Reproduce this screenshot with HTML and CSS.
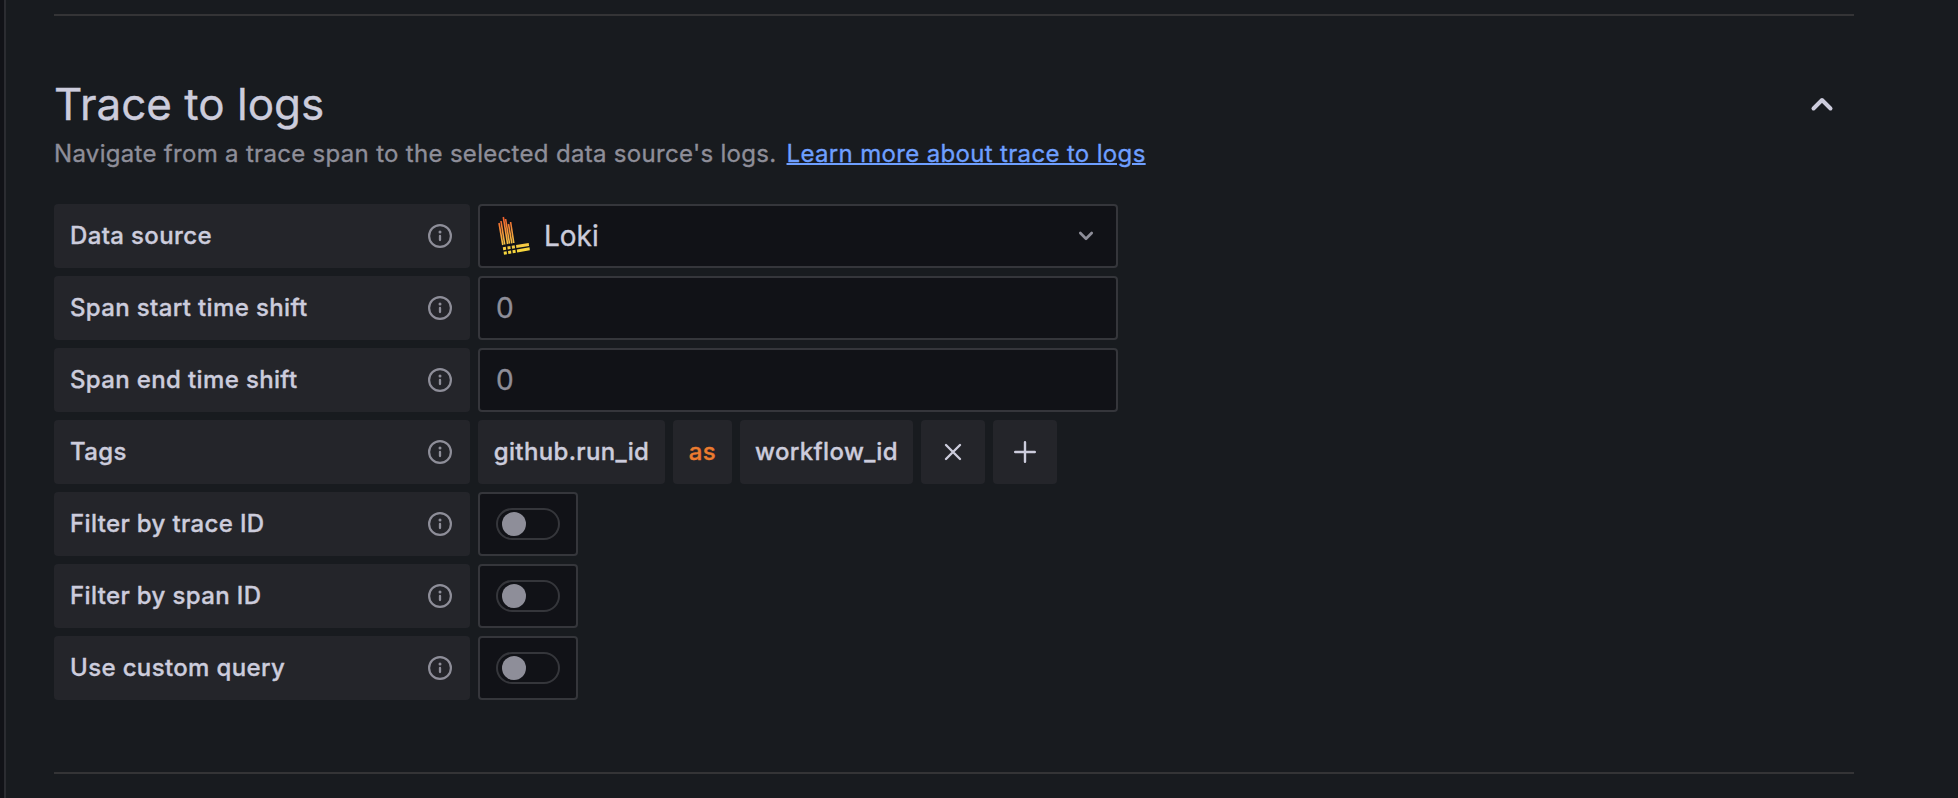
FILE: index.html
```html
<!DOCTYPE html>
<html lang="en">
<head>
<meta charset="utf-8">
<title>Trace to logs</title>
<link rel="stylesheet" href="styles.css">
</head>
<body>
<svg class="defs" width="0" height="0">
  <symbol id="info" viewBox="0 0 24 24">
    <circle cx="12" cy="12" r="10.900" fill="none" stroke="currentColor" stroke-width="2.200"/>
    <circle cx="12" cy="8" r="1.500" fill="currentColor"/>
    <path d="M12 12v4" stroke="currentColor" stroke-width="2.300" stroke-linecap="round"/>
  </symbol>
</svg>
<main class="panel">
  <hr class="divider">
  <section class="section">
    <header class="header">
      <h3 class="title">Trace to logs</h3>
      <svg class="collapse" width="24" height="16" viewBox="0 0 24 16"><path d="M3.500 12.500 12 4l8.500 8.500" fill="none" stroke="currentColor" stroke-width="4" stroke-linecap="round" stroke-linejoin="round"/></svg>
    </header>
    <p class="description"><span>Navigate from a trace span to the selected data source's logs.</span><a class="link" href="#">Learn more about trace to logs</a></p>
    <div class="rows">
      <div class="row">
        <div class="label">Data source<svg class="info"><use href="#info"/></svg></div>
        <div class="field">
          <svg class="loki" width="34" height="40" viewBox="0 0 34 40">
            <defs><linearGradient id="flame" gradientUnits="userSpaceOnUse" x1="15" y1="40" x2="10" y2="0"><stop offset="0" stop-color="#f8df3a"/><stop offset=".3" stop-color="#f5c445"/><stop offset="1" stop-color="#f05a2b"/></linearGradient></defs>
            <g fill="none" stroke="url(#flame)" stroke-width="1.600">
              <path d="M2 7 5.800 29M4 5 7.700 28.500M6.300 1 10.600 28M8.600 3 12.500 27.700M11.500 8 14.800 27.400M13.600 6 16.800 27"/>
            </g>
            <g fill="url(#flame)">
              <path d="M5.800 31.200l3-.4.400 2.900-3 .5zM10.300 30.500l3-.5.400 3-3 .4zM14.700 29.800l3-.5.400 3-3 .4zM19 29.100l12.700-2.200.4 3-12.700 2.100z"/>
              <path d="M6.600 35.700l3-.5.400 3-3 .5zM11 35l3-.5.400 3-3 .5zM15.400 34.200l3-.4.400 3-3 .4zM19.800 33.500l12.700-2.200.4 3-12.700 2.200z"/>
            </g>
          </svg>
          <span class="value">Loki</span>
          <svg class="caret" width="16" height="10" viewBox="0 0 16 10"><path d="m2.300 2 5.700 5.700L13.700 2" fill="none" stroke="currentColor" stroke-width="2.700" stroke-linecap="round" stroke-linejoin="round"/></svg>
        </div>
      </div>
      <div class="row">
        <div class="label">Span start time shift<svg class="info"><use href="#info"/></svg></div>
        <div class="field placeholder">0</div>
      </div>
      <div class="row">
        <div class="label">Span end time shift<svg class="info"><use href="#info"/></svg></div>
        <div class="field placeholder">0</div>
      </div>
      <div class="row">
        <div class="label">Tags<svg class="info"><use href="#info"/></svg></div>
        <div class="chip key">github.run_id</div>
        <div class="chip as">as</div>
        <div class="chip mapped">workflow_id</div>
        <div class="chip icon"><svg width="24" height="24" viewBox="0 0 24 24"><path d="m5 5 14 14m0-14-14 14" stroke="currentColor" stroke-width="2.400" stroke-linecap="round"/></svg></div>
        <div class="chip icon"><svg width="24" height="24" viewBox="0 0 24 24"><path d="M12 2.200v19.600M2.200 12h19.600" stroke="currentColor" stroke-width="2.400" stroke-linecap="round"/></svg></div>
      </div>
      <div class="row">
        <div class="label">Filter by trace ID<svg class="info"><use href="#info"/></svg></div>
        <div class="switch-box"><div class="switch"><div class="thumb"></div></div></div>
      </div>
      <div class="row">
        <div class="label">Filter by span ID<svg class="info"><use href="#info"/></svg></div>
        <div class="switch-box"><div class="switch"><div class="thumb"></div></div></div>
      </div>
      <div class="row">
        <div class="label">Use custom query<svg class="info"><use href="#info"/></svg></div>
        <div class="switch-box"><div class="switch"><div class="thumb"></div></div></div>
      </div>
    </div>
  </section>
  <hr class="divider">
</main>
</body>
</html>
```
FILE: styles.css
```css
* { box-sizing: border-box; }

body {
  margin: 0;
  padding-left: 4px;
  background: #111217;
  color: #ccccdc;
  font-family: Inter, sans-serif;
  -webkit-text-stroke: 0.35px currentColor;
}

.defs { display: block; }

.panel {
  height: 798px;
  padding: 14px 104px 0 48px;
  border-left: 2px solid #2b2c31;
  background: #181b1f;
}

.divider {
  height: 2px;
  margin: 0;
  border: 0;
  background: #343436;
}

.section { height: 756px; padding-top: 62px; }

.header {
  display: flex;
  align-items: center;
  justify-content: space-between;
  height: 52px;
  padding-right: 20px;
}

.title {
  margin: 0;
  font-size: 44px;
  font-weight: 400;
  line-height: 52px;
}

.description {
  display: flex;
  gap: 10px;
  margin: 6px 0 0;
  color: #8e8e99;
  font-size: 24px;
  line-height: 36px;
  letter-spacing: 0.31px;
}

.link {
  color: #6e9fff;
  letter-spacing: 0.34px;
  text-decoration: underline;
  text-decoration-thickness: 2px;
}

.rows {
  display: flex;
  flex-direction: column;
  gap: 8px;
  margin-top: 32px;
}

.row { display: flex; height: 64px; }

.label {
  display: flex;
  align-items: center;
  justify-content: space-between;
  width: 416px;
  margin-right: 8px;
  padding: 0 18px 2px 16px;
  border-radius: 4px;
  background: #24252a;
  font-size: 24px;
  font-weight: 500;
  letter-spacing: 0.36px;
}

.info {
  width: 24px;
  height: 24px;
  margin-top: 2px;
  color: #8e8e99;
}

.field {
  display: flex;
  align-items: center;
  width: 640px;
  padding: 0 22px 0 16px;
  border: 2px solid #35363b;
  border-radius: 4px;
  background: #111217;
  font-size: 28px;
}

.placeholder { color: #8e8e99; }

.loki { margin: 0 13px 0 1px; }

.caret { margin-left: auto; color: #8e8e99; }

.chip {
  display: flex;
  align-items: center;
  justify-content: center;
  margin-right: 8px;
  padding-bottom: 2px;
  border-radius: 4px;
  background: #24252a;
  font-size: 24px;
  font-weight: 500;
  letter-spacing: 0.36px;
}

.key { width: 187px; }
.as { width: 59px; color: #eb7b2f; }
.mapped { width: 173px; }
.icon { width: 64px; padding-bottom: 0; }

.switch-box {
  display: flex;
  align-items: center;
  justify-content: center;
  width: 100px;
  border: 2px solid #35363b;
  border-radius: 4px;
  background: #111217;
}

.switch {
  display: flex;
  align-items: center;
  width: 64px;
  height: 32px;
  padding-left: 4px;
  border: 2px solid #35363b;
  border-radius: 16px;
}

.thumb {
  width: 24px;
  height: 24px;
  border-radius: 50%;
  background: #8e8e99;
}
```
